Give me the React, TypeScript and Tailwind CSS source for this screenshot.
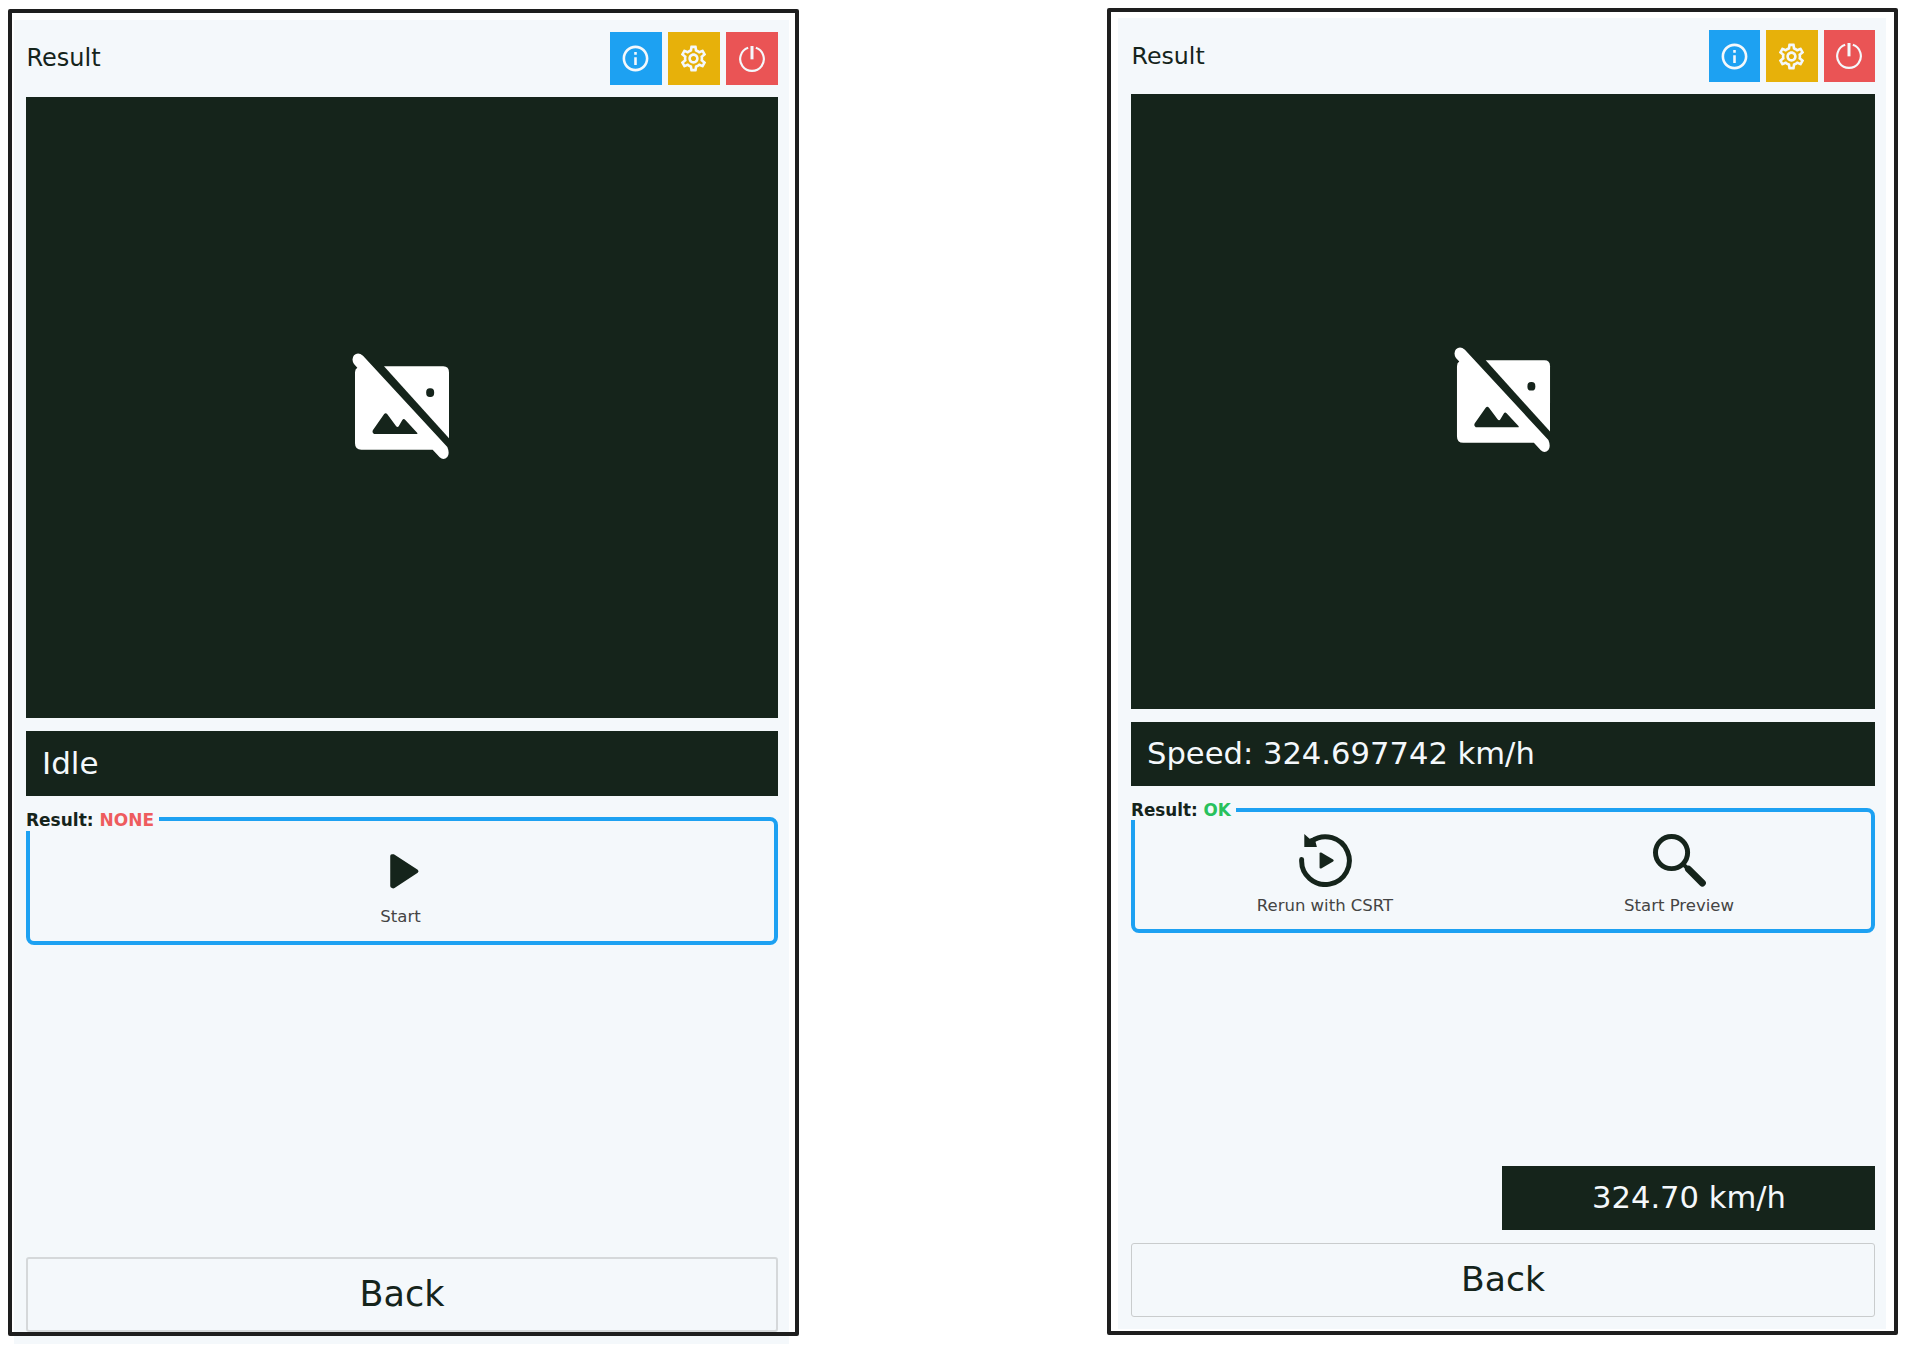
import React from "react";
import { MdOutlineInfo, MdOutlineSettings } from "react-icons/md";

function PowerIcon() {
  return (
    <svg viewBox="0 0 78 78" className="size-[26px]" fill="none" stroke="currentColor" strokeWidth="6.5">
      <path d="M27.500 5.500A35.500 35.500 0 1 0 50.500 5.500" />
      <path d="M39 0V40" strokeWidth="9" />
    </svg>
  );
}

function NoImageIcon({ className }: { className: string }) {
  return (
    <svg viewBox="66 68 300 330" className={className}>
      <path
        fill="#fff"
        d="M82 112Q75 116 75 126V339Q75 358 94 358H308L329 381Q341 391 352 380Q360 369 352 350L99 76Q84 64 72 75Q63 87 72 101Z"
      />
      <path fill="#fff" d="M162 108H340Q357 108 357 126V324Z" />
      <rect x="288.500" y="174" width="24" height="26" rx="11" ry="12" fill="#15241b" />
      <path
        fill="#15241b"
        d="M162 252Q167 246 172 252L198 287Q203 293 207 286L217 269Q221 263 226 269L262 308V311H132Q125 306 129 299Z"
      />
    </svg>
  );
}

function PlayIcon() {
  return (
    <svg viewBox="0 0 160 160" className="size-[53px]">
      <path
        fill="#15241b"
        d="M49 33Q49 28 54 28H60L132 75Q137 80 132 84L62 130Q58 132 54 130Q49 128 49 124Z"
      />
    </svg>
  );
}

function RerunIcon() {
  return (
    <svg viewBox="0 0 160 160" className="size-[53px]" fill="none">
      <path
        d="M8 77A72 72 0 1 0 38 22"
        stroke="#15241b"
        strokeWidth="15"
        strokeLinecap="round"
      />
      <path d="M16 0L32 14L47 10L50 24L54 39H16Z" fill="#15241b" />
      <path d="M62 59Q62 55 67 56L103 77Q107 80 103 83L67 104Q62 105 62 101Z" fill="#15241b" />
    </svg>
  );
}

function PreviewIcon() {
  return (
    <svg viewBox="0 0 160 160" className="size-[53px]" fill="none" stroke="#15241b">
      <circle cx="56" cy="56" r="48.500" strokeWidth="15" />
      <path d="M89 89L104 104" strokeWidth="12" />
      <path d="M107 106L149 148" strokeWidth="21" strokeLinecap="round" />
    </svg>
  );
}

function Action({ icon, label, className }: { icon: React.ReactNode; label: string; className: string }) {
  return (
    <button className={"flex flex-col items-center text-[#444] " + className}>
      {icon}
      <span className="mt-[7px] leading-[24px] whitespace-nowrap">{label}</span>
    </button>
  );
}

function Toolbar({ className, button }: { className: string; button: string }) {
  return (
    <div className={"flex text-[#f4f8fb] " + className}>
      <button className={"flex items-center justify-center bg-[#1da1f2] " + button}>
        <MdOutlineInfo className="size-[31px]" />
      </button>
      <button className={"flex items-center justify-center bg-[#e7b10a] " + button}>
        <MdOutlineSettings className="size-[31px]" />
      </button>
      <button className={"flex items-center justify-center bg-[#ea5455] " + button}>
        <PowerIcon />
      </button>
    </div>
  );
}

function IdleScreen() {
  return (
    <section className="relative ml-[8px] mt-[9px] h-[1335px] w-[791px] shrink-0 pl-[6px] pt-[11px]">
      <div className="flex h-[1324px] w-[775px] flex-col bg-[#f4f8fb] pl-[12px] pr-[11px] pt-[12px]">
        <header className="flex h-[53px] items-center justify-between">
          <h1 className="-mt-[1px] pl-[0.500px] text-[24px] leading-[28px]">Result</h1>
          <Toolbar className="gap-[5.500px]" button="h-[53px] w-[52.500px]" />
        </header>
        <div className="mt-[12px] flex h-[621px] shrink-0 items-center justify-center bg-[#15241b]">
          <NoImageIcon className="h-[110px] w-[100px]" />
        </div>
        <div className="mt-[13px] flex h-[65px] shrink-0 items-center bg-[#15241b] pl-[16px] text-[31px] text-[#f4f8fb]">
          Idle
        </div>
        <div className="relative mt-[21px] flex h-[128px] shrink-0 justify-center rounded-[8px] border-4 border-[#1da1f2] pr-[3px] pt-[24px]">
          <div className="absolute -left-[4px] -top-[15px] h-[25px] w-[133px] bg-[#f4f8fb] text-[17px] font-bold leading-[28px] whitespace-nowrap">
            Result: <span className="text-[#ee5c5e]">NONE</span>
          </div>
          <Action className="text-[16.500px]" icon={<PlayIcon />} label="Start" />
        </div>
        <button className="mt-[312px] h-[75px] shrink-0 rounded-[3px] border-2 border-[#d5d8da] text-[35px]">
          Back
        </button>
      </div>
      <div className="pointer-events-none absolute left-0 top-0 h-[1327px] w-[791px] rounded-[2px] border-4 border-[#1e1e1e]" />
    </section>
  );
}

function SpeedScreen() {
  return (
    <section className="relative ml-[308px] mt-[8px] h-[1327px] w-[791px] shrink-0 pl-[11px] pt-[10px]">
      <div className="flex h-[1311px] w-[768px] flex-col bg-[#f4f8fb] pl-[13px] pr-[11px] pt-[12px]">
        <header className="flex h-[52px] items-center justify-between">
          <h1 className="-mt-[1px] pl-[0.500px] text-[23.700px] leading-[28px]">Result</h1>
          <Toolbar className="gap-[6px]" button="h-[52px] w-[51.500px]" />
        </header>
        <div className="mt-[12px] flex h-[615px] shrink-0 items-center justify-center bg-[#15241b]">
          <NoImageIcon className="h-[109px] w-[99px]" />
        </div>
        <div className="mt-[13px] flex h-[64px] shrink-0 items-center bg-[#15241b] pl-[16px] text-[30.600px] text-[#f4f8fb]">
          Speed: 324.697742 km/h
        </div>
        <div className="relative mt-[22px] grid h-[125px] shrink-0 grid-cols-2 rounded-[8px] border-4 border-[#1da1f2] pl-[13px] pr-[15px] pt-[22px]">
          <div className="absolute -left-[4px] -top-[16px] h-[24px] w-[105px] bg-[#f4f8fb] text-[16.800px] font-bold leading-[28px] whitespace-nowrap">
            Result: <span className="text-[#28c15c]">OK</span>
          </div>
          <Action className="text-[16.500px]" icon={<RerunIcon />} label="Rerun with CSRT" />
          <Action className="text-[16.500px]" icon={<PreviewIcon />} label="Start Preview" />
        </div>
        <div className="mt-[233px] flex h-[64px] w-[373px] shrink-0 items-center justify-center self-end bg-[#15241b] pl-[1px] text-[30.600px] text-[#f4f8fb]">
          324.70 km/h
        </div>
        <button className="mt-[13px] h-[74px] shrink-0 rounded-[3px] border border-[#c9cccd] text-[34.600px]">
          Back
        </button>
      </div>
      <div className="pointer-events-none absolute left-0 top-0 h-[1327px] w-[791px] rounded-[2px] border-4 border-[#1e1e1e]" />
    </section>
  );
}

export default function App() {
  return (
    <main className="flex h-[1354px] w-[1905px] items-start overflow-hidden bg-white font-['DejaVu_Sans',sans-serif] text-[#15241b]">
      <IdleScreen />
      <SpeedScreen />
    </main>
  );
}
